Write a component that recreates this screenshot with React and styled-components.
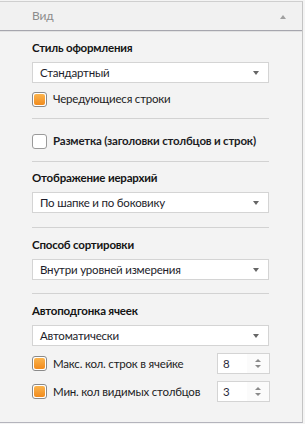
import React from 'react';
import styled, { createGlobalStyle } from "styled-components"

const GlobalStyle = createGlobalStyle`
    html, body {
        margin: 0;
        padding: 0;
        background: #f4f4f4;
    }
    body {
        font-family: Lato, "Noto Sans", sans-serif;
        font-size: 11.5px;
        letter-spacing: -0.2px;
        color: #1e1e1e;
    }
`

const Panel = styled.div`
    width: 302px;
    height: 420px;
    margin-top: 1px;
    border-top: 1px solid #cfcfcf;
    border-right: 1px solid #c4c4c4;
    border-bottom: 1px solid #b4b4bc;
    background: #f3f3f3;
    display: flex;
    flex-direction: column;
`
const Header = styled.div`
    height: 28px;
    display: flex;
    align-items: center;
    justify-content: space-between;
    padding: 0 16px 0 32px;
    background: #f1f1f1;
    border-bottom: 1px solid #a6a6ae;
    box-shadow: 0 1px 0 #e2e2e2;
    color: #8c8c8c;
`
const HeaderTitle = styled.span`
    line-height: 16px;
    font-size: 12px;
`
const UpArrow = styled.span`
    width: 0;
    height: 0;
    border-left: 3px solid transparent;
    border-right: 3px solid transparent;
    border-bottom: 4px solid #a0a0a0;
    margin-top: 1px;
`
const Body = styled.div`
    padding: 0 33px 0 32px;
    white-space: nowrap;
`
const Section = styled.div`
    display: flex;
    flex-direction: column;
    padding: ${p => p.$top}px 0 ${p => p.$bottom}px;
    border-bottom: ${p => p.$last ? 'none' : '1px solid #d2d2d2'};
`
const Title = styled.div`
    font-weight: 700;
    line-height: 16px;
    color: #141414;
    margin-bottom: 6px;
`
const Select = styled.div`
    height: 19px;
    border: 1px solid #d4d4d4;
    background: #fff;
    display: flex;
    align-items: center;
    justify-content: space-between;
    padding: 0 9px 0 7px;
    color: #1c1c2a;
`
const DownArrow = styled.span`
    width: 0;
    height: 0;
    border-left: 3px solid transparent;
    border-right: 3px solid transparent;
    border-top: 4px solid #666;
`
const Row = styled.div`
    display: flex;
    align-items: center;
    justify-content: space-between;
    height: ${p => p.$h || 16}px;
    margin-top: ${p => p.$mt || 0}px;
`
const CheckLabel = styled.label`
    display: flex;
    align-items: center;
    gap: 6px;
    line-height: 16px;
    font-weight: ${p => p.$bold ? 700 : 400};
    color: #1c1c24;
`
const Box = styled.span`
    width: 11px;
    height: 11px;
    border: 1px solid ${p => p.$checked ? '#8a8a8a' : '#9a9a9a'};
    border-radius: 3px;
    background: #fff;
    padding: 1px;
    display: inline-flex;
    flex-shrink: 0;
    &::after {
        content: '';
        flex: 1;
        border-radius: 2px;
        background: ${p => p.$checked ? 'linear-gradient(#fbb44e, #f18b1d)' : 'transparent'};
    }
`
const Spin = styled.div`
    width: 46px;
    height: 19px;
    border: 1px solid #d4d4d4;
    background: #fff;
    display: flex;
    align-items: center;
    justify-content: space-between;
    padding: 0 0 0 5px;
    margin-right: -1px;
`
const SpinValue = styled.span`
    color: #2a2a3a;
    line-height: 16px;
`
const SpinButtons = styled.div`
    width: 22px;
    height: 100%;
    display: flex;
    flex-direction: column;
    align-items: center;
    justify-content: center;
    gap: 3px;
    background: #fbfbfb;
`
const SpinUp = styled.span`
    border-left: 3px solid transparent;
    border-right: 3px solid transparent;
    border-bottom: 3px solid #8a8a8a;
`
const SpinDown = styled.span`
    border-left: 3px solid transparent;
    border-right: 3px solid transparent;
    border-top: 3px solid #8a8a8a;
`

function Check({ checked, bold, children }) {
    return (
        <CheckLabel $bold={bold}>
            <Box $checked={checked} />
            {children}
        </CheckLabel>
    )
}

function Dropdown({ value }) {
    return (
        <Select>
            <span>{value}</span>
            <DownArrow />
        </Select>
    )
}

function Spinner({ value }) {
    return (
        <Spin>
            <SpinValue>{value}</SpinValue>
            <SpinButtons>
                <SpinUp />
                <SpinDown />
            </SpinButtons>
        </Spin>
    )
}

export default function App() {
    return (
        <>
            <GlobalStyle />
            <Panel>
                <Header>
                    <HeaderTitle>Вид</HeaderTitle>
                    <UpArrow />
                </Header>
                <Body>
                    <Section $top={9} $bottom={11}>
                        <Title>Стиль оформления</Title>
                        <Dropdown value="Стандартный" />
                        <Row $mt={8}>
                            <Check checked>Чередующиеся строки</Check>
                        </Row>
                    </Section>
                    <Section $top={14} $bottom={12}>
                        <Row>
                            <Check bold>Разметка (заголовки столбцов и строк)</Check>
                        </Row>
                    </Section>
                    <Section $top={8} $bottom={14}>
                        <Title>Отображение иерархий</Title>
                        <Dropdown value="По шапке и по боковику" />
                    </Section>
                    <Section $top={9} $bottom={13}>
                        <Title>Способ сортировки</Title>
                        <Dropdown value="Внутри уровней измерения" />
                    </Section>
                    <Section $top={9} $bottom={0} $last>
                        <Title>Автоподгонка ячеек</Title>
                        <Dropdown value="Автоматически" />
                        <Row $h={21} $mt={7}>
                            <Check checked>Макс. кол. строк в ячейке</Check>
                            <Spinner value="8" />
                        </Row>
                        <Row $h={21} $mt={7}>
                            <Check checked>Мин. кол видимых столбцов</Check>
                            <Spinner value="3" />
                        </Row>
                    </Section>
                </Body>
            </Panel>
        </>
    )
}
